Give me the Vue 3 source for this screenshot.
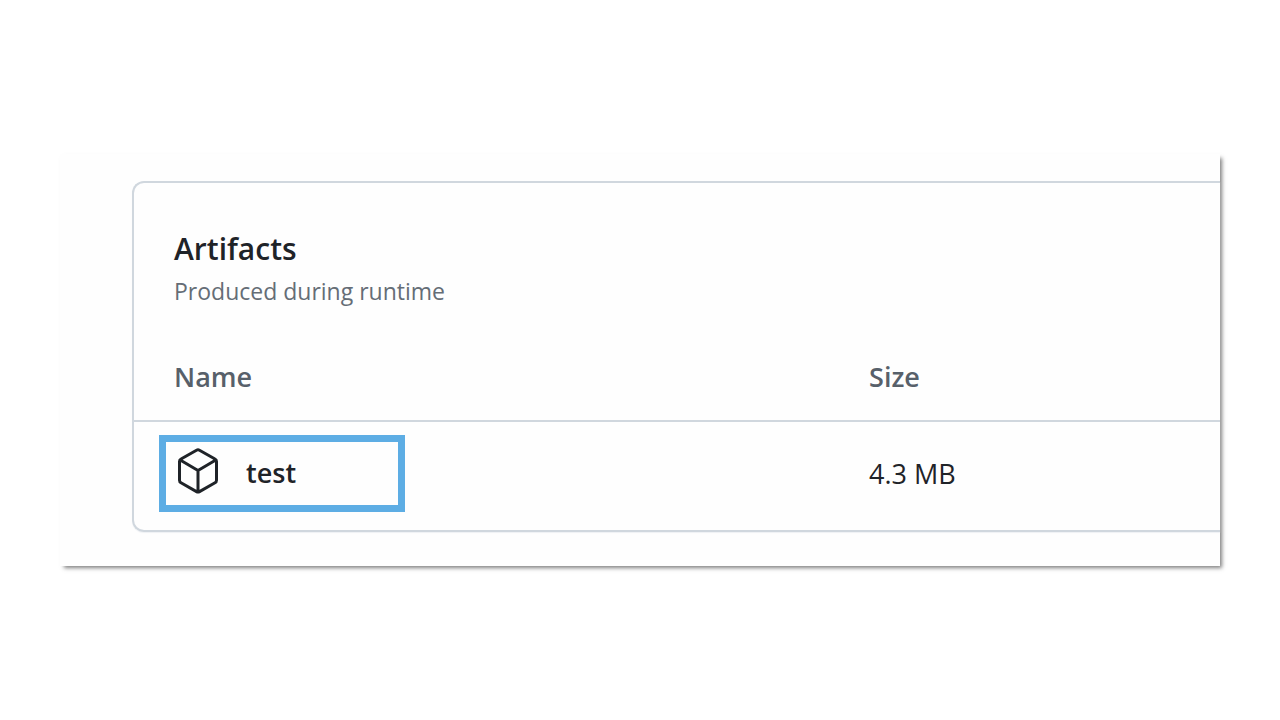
<script setup>
const artifacts = [{ name: 'test', size: '4.3 MB' }]
</script>

<template>
  <main class="page">
    <div class="panel">
      <section class="card" aria-labelledby="artifacts-title">
        <header class="heading">
          <h2 id="artifacts-title">Artifacts</h2>
          <p>Produced during runtime</p>
        </header>
        <table>
          <thead>
            <tr>
              <th scope="col" class="name-col">Name</th>
              <th scope="col">Size</th>
            </tr>
          </thead>
          <tbody>
            <tr v-for="item in artifacts" :key="item.name">
              <td class="name-cell">
                <div class="highlight">
                  <svg viewBox="0 0 42 48" aria-hidden="true">
                    <path d="M19.5 3.2 4 12Q2.5 12.8 2.5 14.5V33.3Q2.5 35 4 35.8L19.5 44.6Q21 45.4 22.5 44.6L38 35.8Q39.5 35 39.5 33.3V14.5Q39.5 12.8 38 12L22.5 3.2Q21 2.4 19.5 3.2ZM3.2 13 21 23.5 38.8 13M21 23.5V45" />
                  </svg>
                  <span>{{ item.name }}</span>
                </div>
              </td>
              <td>{{ item.size }}</td>
            </tr>
          </tbody>
        </table>
      </section>
    </div>
  </main>
</template>

<style>
body {
  background: #fff;
}
</style>

<style scoped>
.page {
  padding: 154px 60px;
  font-family: "Segoe UI", "Open Sans", "Noto Sans", sans-serif;
  color: #1f2328;
}
.panel {
  padding: 27px 0 34px 72px;
  background: #fefefe;
  box-shadow: 3px 3px 4px -1px rgba(0, 0, 0, 0.5);
}
.card {
  border: 2px solid #d0d7de;
  border-right: 0;
  border-radius: 12px 0 0 12px;
  box-shadow: 0 1px 1px #eff1f4;
}
.heading {
  padding: 44px 40px 0;
}
h2 {
  margin: 0;
  font-size: 30px;
  font-weight: 550;
  line-height: 44px;
}
p {
  margin: 0;
  font-size: 23px;
  line-height: 40px;
  color: #656d76;
}
table {
  width: 100%;
  margin-top: 24px;
  border-collapse: collapse;
  table-layout: fixed;
  font-size: 27px;
  line-height: 40px;
}
th {
  padding: 22px 40px 23px;
  border-bottom: 2px solid #d0d7de;
  text-align: left;
  font-weight: 550;
  color: #57606a;
}
.name-col {
  width: 64%;
  box-sizing: border-box;
}
td {
  padding: 13px 40px 18px;
}
.name-cell {
  padding-left: 25px;
}
.highlight {
  display: flex;
  align-items: center;
  gap: 27px;
  box-sizing: border-box;
  width: 246px;
  height: 77px;
  padding: 0 11px 2px;
  border: 7px solid #5dade4;
  font-weight: 550;
}
svg {
  width: 42px;
  height: 48px;
  margin-bottom: 4px;
  fill: none;
  stroke: #1f2328;
  stroke-width: 3;
  stroke-linejoin: round;
}
</style>
